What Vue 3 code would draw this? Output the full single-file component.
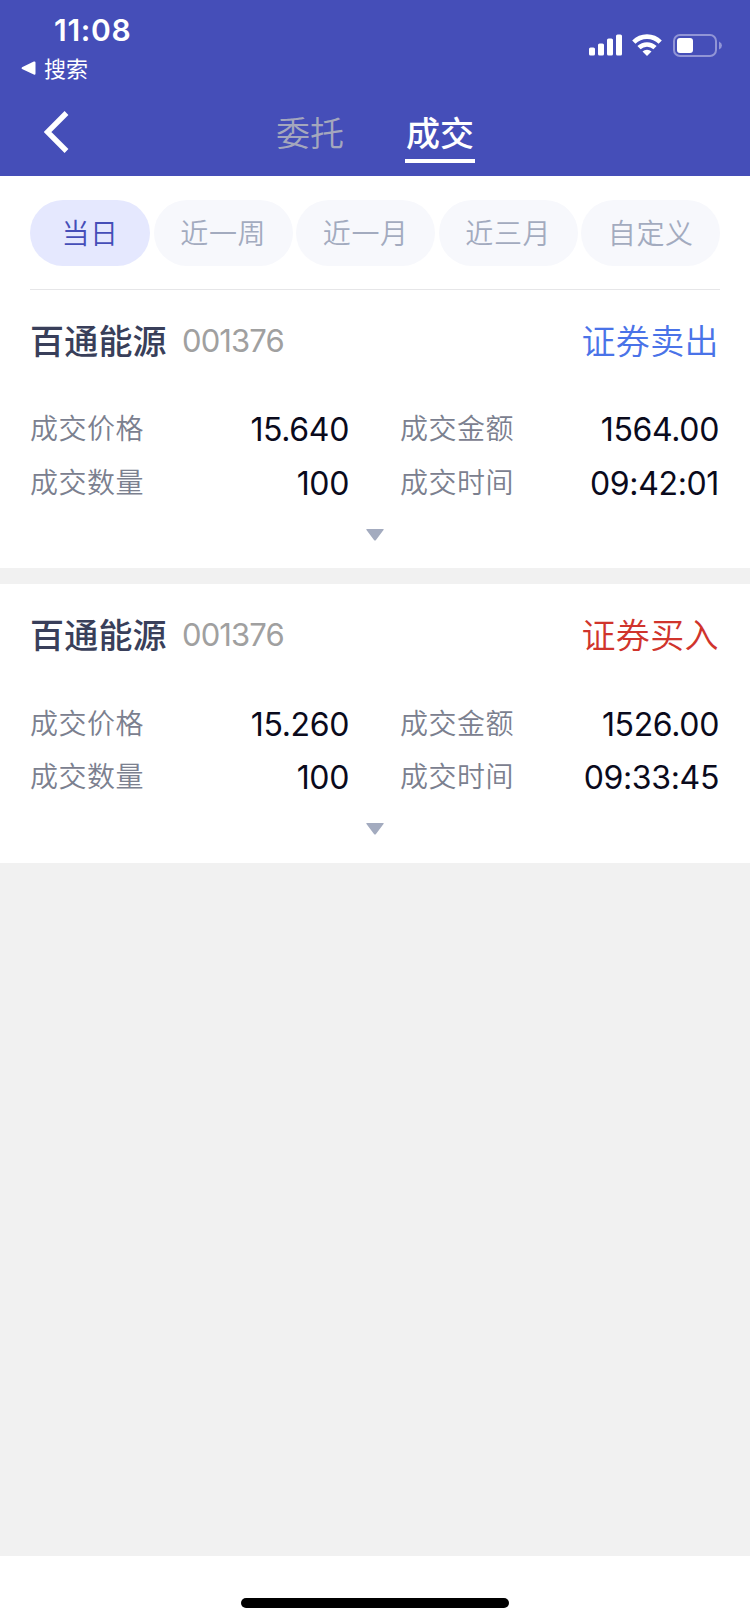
<script setup>
const ranges = [
  { label: '当日', active: true },
  { label: '近一周' },
  { label: '近一月' },
  { label: '近三月' },
  { label: '自定义' },
]
const deals = [
  { name: '百通能源', code: '001376', side: '证券卖出', type: 'sell', price: '15.640', amount: '1564.00', count: '100', time: '09:42:01' },
  { name: '百通能源', code: '001376', side: '证券买入', type: 'buy', price: '15.260', amount: '1526.00', count: '100', time: '09:33:45' },
]
</script>

<template>
  <div class="page">
    <header class="header">
      <div class="status">
        <div class="status-left">
          <div class="clock">11:08</div>
          <div class="return-app">
            <svg width="15" height="15" viewBox="0 0 15 15"><path d="M1 6.2 12.8.6Q14.5 0 14.5 1.8V12.4Q14.5 14.200 12.800 13.500L1 8Q0 7.100 1 6.200Z" fill="#fff" /></svg>
            <span class="return-text">搜索</span>
          </div>
        </div>
        <div class="status-icons">
          <svg width="34" height="22" viewBox="0 0 34 22" fill="#fff">
            <rect x="0" y="13.500" width="6" height="8" rx="1.600" />
            <rect x="9" y="9.500" width="6" height="12" rx="1.600" />
            <rect x="18" y="4.500" width="6" height="17" rx="1.600" />
            <rect x="27" y="0.500" width="6" height="21" rx="1.600" />
          </svg>
          <svg class="wifi" width="30" height="22" viewBox="0 0 30 22" fill="none" stroke="#fff" stroke-width="4.600">
            <path d="M1.800 8.100A18.700 18.700 0 0 1 28.200 8.100" />
            <path d="M7 13.700A11.500 11.500 0 0 1 23 13.700" />
            <path d="M15 22 10.500 17.600A6.200 6.200 0 0 1 19.500 17.600Z" fill="#fff" stroke="none" />
          </svg>
          <svg class="battery" width="50" height="24" viewBox="0 0 50 24">
            <rect x="1" y="1" width="42" height="21" rx="6" fill="none" stroke="#9195d6" stroke-width="2" />
            <rect x="4" y="4" width="16" height="15" rx="3" fill="#fff" />
            <path d="M46 7.500Q49 9 49 11.500T46 15.500Z" fill="#9195d6" />
          </svg>
        </div>
      </div>
      <nav class="nav">
        <svg class="back" width="26" height="42" viewBox="0 0 26 42"><path d="M22.500 2 3.500 21 22.500 40" fill="none" stroke="#fff" stroke-width="5.400" /></svg>
        <div class="tabs">
          <div class="tab">委托</div>
          <div class="tab tab-on">成交</div>
        </div>
      </nav>
    </header>

    <section class="filters">
      <div v-for="r in ranges" :key="r.label" class="pill" :class="{ 'pill-on': r.active }">{{ r.label }}</div>
    </section>

    <main class="list">
      <article v-for="d in deals" :key="d.time" class="card">
        <div class="card-head">
          <span class="name">{{ d.name }}</span>
          <span class="code">{{ d.code }}</span>
          <span class="side" :class="d.type">{{ d.side }}</span>
        </div>
        <div class="fields">
          <div class="field"><span class="label">成交价格</span><span class="value">{{ d.price }}</span></div>
          <div class="field"><span class="label">成交金额</span><span class="value">{{ d.amount }}</span></div>
          <div class="field"><span class="label">成交数量</span><span class="value">{{ d.count }}</span></div>
          <div class="field"><span class="label">成交时间</span><span class="value">{{ d.time }}</span></div>
        </div>
        <svg class="more" width="18" height="12" viewBox="0 0 18 12"><path d="M.6 0H17.400Q18 .4 17.500 1L9.800 11.200Q9 12 8.200 11.200L.5 1Q0 .4.6 0Z" fill="#a3abbf" /></svg>
      </article>
    </main>

    <footer class="footer"><div class="home-bar"></div></footer>
  </div>
</template>

<style>
body {
  margin: 0;
}
</style>

<style scoped>
.page {
  display: flex;
  flex-direction: column;
  width: 750px;
  height: 1624px;
  overflow: hidden;
  background: #f1f1f1;
  font-family: Inter, "Noto Sans CJK SC", sans-serif;
}
.header {
  height: 176px;
  background: #454eb8;
  color: #fff;
}
.status {
  display: flex;
  justify-content: space-between;
  height: 88px;
}
.status-left {
  padding: 12px 0 0 21px;
}
.clock {
  padding-left: 33px;
  font-size: 30px;
  font-weight: 600;
  line-height: 37px;
  letter-spacing: 0.7px;
}
.return-app {
  display: flex;
  align-items: center;
  gap: 8px;
  height: 38px;
  font-size: 22px;
  font-weight: 400;
}
.return-text {
  padding-bottom: 3px;
}
.status-icons {
  display: flex;
  align-items: flex-start;
  padding: 34px 27px 0 0;
}
.wifi {
  margin-left: 9px;
}
.battery {
  margin-left: 11px;
}
.nav {
  display: grid;
  grid-template-columns: 120px 1fr 120px;
  height: 88px;
}
.back {
  margin: 23px 0 0 44px;
}
.tabs {
  display: flex;
  justify-content: center;
  gap: 60px;
}
.tab {
  box-sizing: border-box;
  width: 70px;
  height: 75px;
  padding-top: 21px;
  line-height: 50px;
  text-align: center;
  font-size: 34px;
  font-weight: 350;
  white-space: nowrap;
  color: #a4a7bd;
}
.tab-on {
  border-bottom: 4px solid #fff;
  color: #fff;
  font-weight: 500;
}
.filters {
  display: flex;
  justify-content: space-between;
  box-sizing: border-box;
  height: 114px;
  padding: 24px 30px 0;
  background: linear-gradient(#e6e6e8, #e6e6e8) 30px 113px / 690px 1px no-repeat #fff;
}
.pill {
  box-sizing: border-box;
  width: 138.600px;
  height: 66px;
  border-radius: 33px;
  background: #f7f8fc;
  color: #a3abbf;
  font-size: 28px;
  font-weight: 350;
  line-height: 69px;
  letter-spacing: 0.6px;
  text-align: center;
}
.pill-on {
  width: 120px;
  background: #e5e8fe;
  color: #454eb8;
}
.list {
  display: flex;
  flex: 1;
  flex-direction: column;
  gap: 16px;
}
.card {
  display: flex;
  flex-direction: column;
  box-sizing: border-box;
  height: 278.4px;
  padding: 0 30px;
  background: #fff;
}
.card-head {
  display: flex;
  align-items: center;
  height: 100px;
}
.name {
  width: 138px;
  padding-bottom: 2px;
  font-size: 34px;
  font-weight: 500;
  letter-spacing: 0.2px;
  color: #393f5a;
}
.code {
  margin-left: 14px;
  padding-top: 1px;
  font-size: 31px;
  font-weight: 400;
  letter-spacing: -0.9px;
  color: #a0a0a0;
}
.side {
  margin-left: auto;
  padding: 0 1px 2px 0;
  font-size: 34px;
  font-weight: 350;
  letter-spacing: 0.4px;
}
.sell {
  color: #4a73e8;
}
.buy {
  color: #d0342c;
}
.fields {
  display: grid;
  grid-template-columns: 320px 320px;
  column-gap: 50px;
  grid-auto-rows: 53.5px;
  margin-top: 12px;
}
.field {
  display: flex;
  align-items: center;
  justify-content: space-between;
}
.label {
  padding-bottom: 3px;
  font-size: 28px;
  font-weight: 350;
  letter-spacing: 0.5px;
  color: #7b808f;
}
.value {
  padding: 2px 1px 0 0;
  font-size: 32px;
  letter-spacing: -0.35px;
  color: #0a0a1c;
}
.more {
  align-self: center;
  margin-top: 20px;
}
.footer {
  display: flex;
  height: 68px;
  background: #fff;
}
.home-bar {
  width: 268px;
  height: 10px;
  margin: 42px auto 0;
  border-radius: 5px;
  background: #000;
}
</style>
